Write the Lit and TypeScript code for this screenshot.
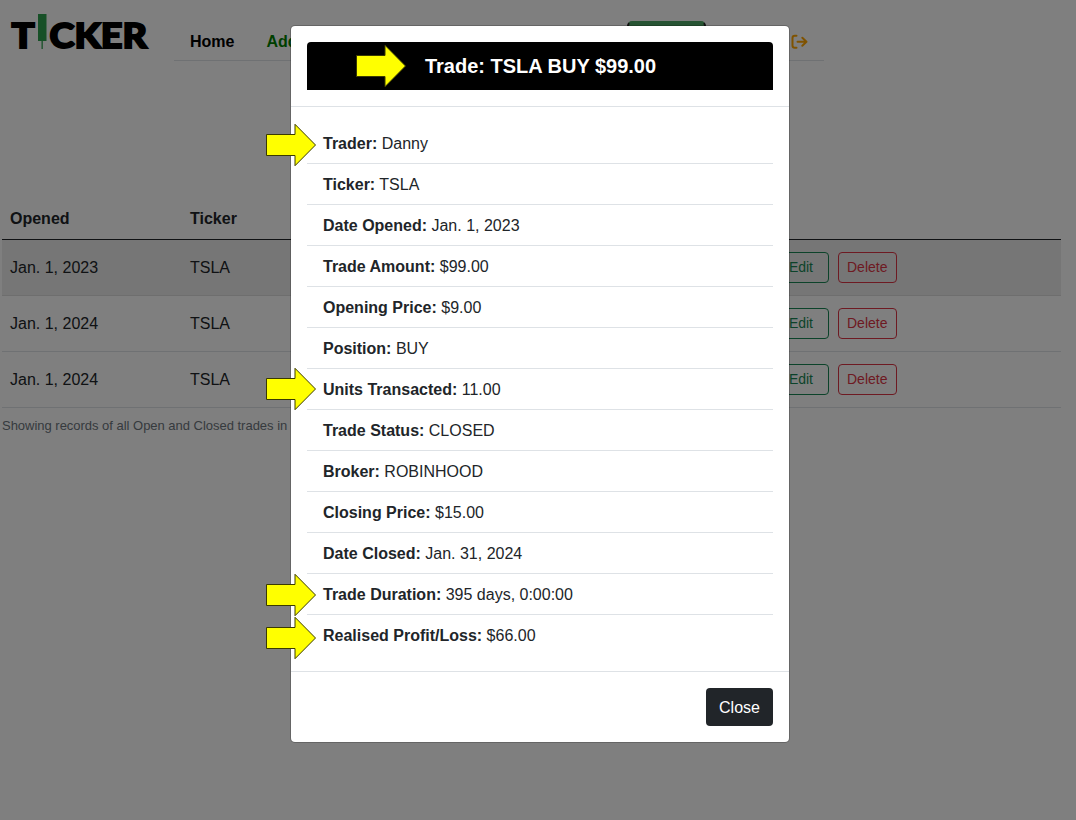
import { LitElement, html, css, svg } from "lit";
import { customElement } from "lit/decorators.js";

const arrow = (cls: string) => html`<svg class="arrow ${cls}" width="52" height="44" viewBox="0 0 52 44">
  <path d="M1.5 11.5H30V1.3L50.5 22L30 42.7V32.5H1.5Z" fill="#ffff00" stroke="#3a3a00" stroke-width="1"/>
</svg>`;

@customElement("app-root")
export class AppRoot extends LitElement {
  static styles = css`
    :host { display: block; position: relative; width: 1076px; height: 820px; overflow: hidden; background: #fff;
      font: 16px/24px "Liberation Sans", Arial, sans-serif; color: #212529; }
    * { box-sizing: border-box; }
    .top { display: flex; height: 61px; }
    .logo { width: 174px; height: 61px; display: block; flex: none; }
    .logo text { font-family: Lato, sans-serif; font-weight: 900; font-size: 35px; stroke: #000; stroke-width: 1.9px; }
    nav { display: flex; width: 650px; height: 61px; padding: 21px 16px 7px; border-bottom: 1px solid #dee2e6; font-weight: 700; color: #000; }
    nav span { margin-top: 9px; }
    .add { color: #008000; margin-left: 32px; width: 330px; }
    .new { width: 79px; height: 38px; margin-left: 31px; background: #4fa866; border: 2px solid #222; border-top-color: #4fa866; border-radius: 5px; }
    .out { margin: 13px 0 0 85px; flex: none; }
    table { margin: 138px 0 0 2px; width: 1059px; border-collapse: separate; border-spacing: 0; table-layout: fixed; }
    th { text-align: left; height: 41px; padding: 8px; border-bottom: 1px solid #212529; }
    td { height: 56px; padding: 0 8px; border-bottom: 1px solid #dee2e6; vertical-align: middle; }
    .c1 { width: 180px; } .c2 { width: 582px; }
    .hover td { background: #ececec; border-color: #dcdcdc; }
    .acts { display: flex; gap: 9px; }
    .b { height: 31px; border: 1px solid #198754; color: #198754; border-radius: 4px; font-size: 14px; line-height: 21px; padding: 4px 8px; }
    .edit { width: 57px; text-align: right; padding-right: 15px; }
    .del { width: 59px; border-color: #dc3545; color: #dc3545; }
    .cap { margin: 8px 0 0 2px; font-size: 13px; line-height: 20px; letter-spacing: -.02px; color: #6c757d; }
    .backdrop { position: absolute; inset: 0; background: rgba(0,0,0,.5); }
    .modal { position: absolute; left: 290px; top: 25px; width: 500px; height: 718px; background: #fff; background-clip: padding-box;
      border: 1px solid rgba(0,0,0,.2); border-radius: 5px; }
    .head { padding: 16px; border-bottom: 1px solid #dee2e6; }
    h5 { margin: 0; height: 48px; padding-left: 1px; background: #000; color: #fff; font-size: 20px; line-height: 48px; text-align: center; border-radius: 4px 4px 0 0; }
    ul { list-style: none; margin: 0; padding: 16px; }
    li { height: 41px; padding: 9px 16px 7px; border-bottom: 1px solid #dee2e6; }
    li:last-child { border: 0; height: 40px; }
    .foot { display: flex; justify-content: flex-end; border-top: 1px solid #dee2e6; padding: 16px; }
    .close { width: 67px; height: 38px; line-height: 24px; padding-top: 8px; text-align: center; background: #212529; color: #fff; border-radius: 4px; }
    .arrow { position: absolute; left: 265px; }
    .a0 { left: 355px; top: 44px; } .a1 { top: 123px; } .a2 { top: 367px; } .a3 { top: 573px; } .a4 { top: 616px; }
  `;

  private rows = ["Jan. 1, 2023", "Jan. 1, 2024", "Jan. 1, 2024"];
  private details = [
    ["Trader", "Danny"], ["Ticker", "TSLA"], ["Date Opened", "Jan. 1, 2023"], ["Trade Amount", "$99.00"],
    ["Opening Price", "$9.00"], ["Position", "BUY"], ["Units Transacted", "11.00"], ["Trade Status", "CLOSED"],
    ["Broker", "ROBINHOOD"], ["Closing Price", "$15.00"], ["Date Closed", "Jan. 31, 2024"],
    ["Trade Duration", "395 days, 0:00:00"], ["Realised Profit/Loss", "$66.00"],
  ];

  render() {
    return html`
      <div class="top">
        <svg class="logo" viewBox="0 0 174 61">
          ${svg`<text x="11.4" y="48" textLength="23.2" lengthAdjust="spacingAndGlyphs">T</text>
          <rect x="38" y="14" width="8.5" height="27" fill="#2fa04f"/>
          <rect x="41.5" y="41" width="1.3" height="8" fill="#2fa04f"/>
          <text x="49.5" y="48" textLength="97.5" lengthAdjust="spacingAndGlyphs">CKER</text>`}
        </svg>
        <nav>
          <span>Home</span><span class="add">Add</span><div class="new"></div>
          <svg class="out" width="17" height="16" viewBox="0 0 17 16" fill="none" stroke="#ffa500" stroke-width="2" stroke-linecap="round" stroke-linejoin="round">
            <path d="M5.5 1.8H3.8Q1.5 1.8 1.5 4V11.5Q1.5 13.8 3.8 13.8H5.5M6.5 7.8H15.3M11.3 3.8L15.5 7.8L11.3 11.8"/>
          </svg>
        </nav>
      </div>
      <table>
        <tr><th class="c1">Opened</th><th class="c2">Ticker</th><th></th></tr>
        ${this.rows.map((d, i) => html`<tr class=${i === 0 ? "hover" : ""}><td>${d}</td><td>TSLA</td>
          <td><div class="acts"><div class="b edit">Edit</div><div class="b del">Delete</div></div></td></tr>`)}
      </table>
      <div class="cap">Showing records of all Open and Closed trades in</div>
      <div class="backdrop"></div>
      <div class="modal">
        <div class="head"><h5>Trade: TSLA BUY $99.00</h5></div>
        <ul>${this.details.map(([k, v]) => html`<li><b>${k}:</b> ${v}</li>`)}</ul>
        <div class="foot"><div class="close">Close</div></div>
      </div>
      ${[0, 1, 2, 3, 4].map((n) => arrow("a" + n))}
    `;
  }
}
